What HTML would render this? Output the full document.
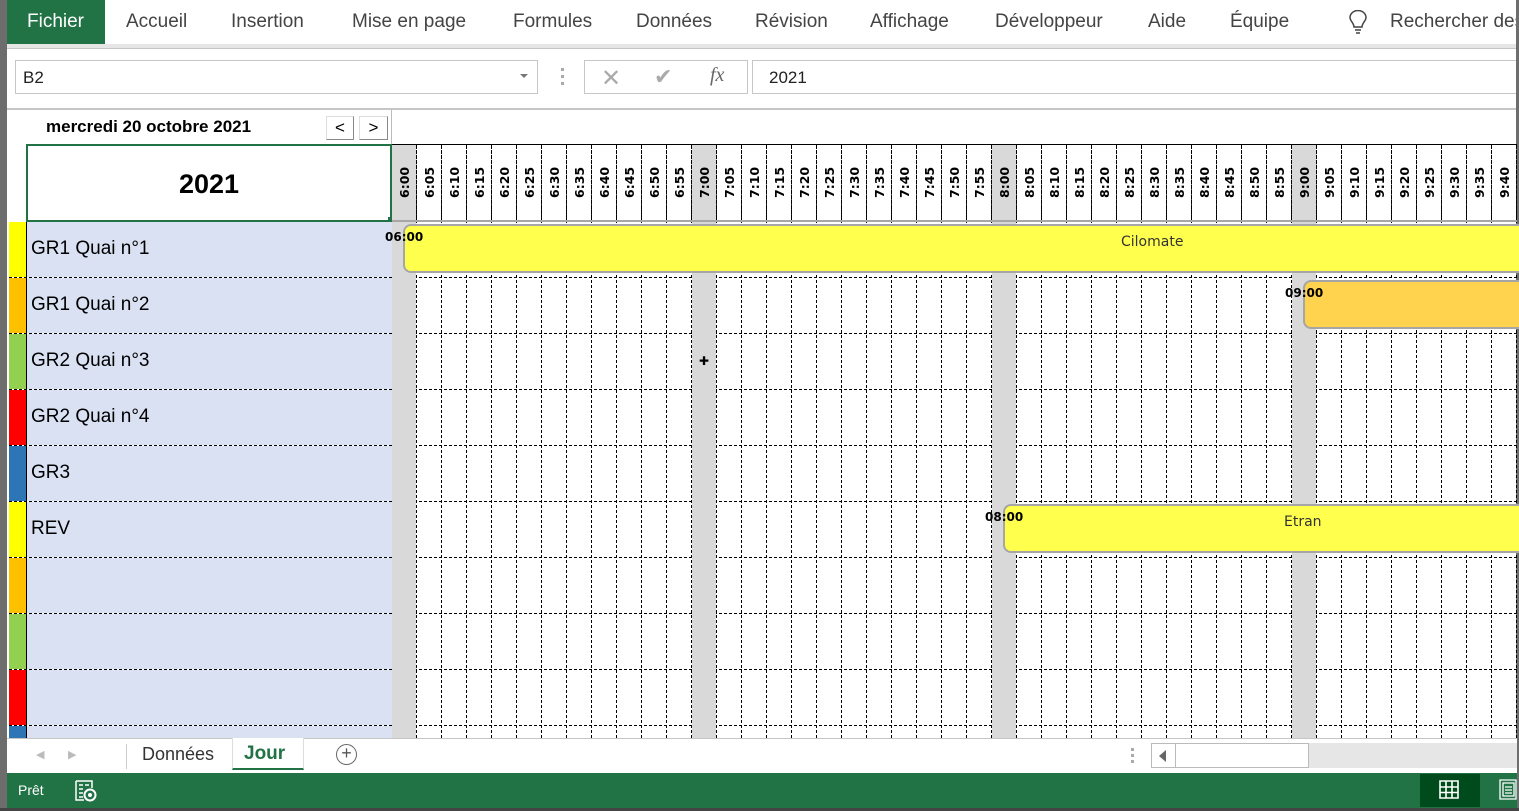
<!DOCTYPE html>
<html><head><meta charset="utf-8">
<style>
*{margin:0;padding:0;box-sizing:border-box}
body{width:1519px;height:811px;overflow:hidden;background:#fff;font-family:"Liberation Sans",sans-serif;position:relative}
.a{position:absolute}
.tab{position:absolute;top:11px;font-size:19px;color:#444;white-space:nowrap}
.hdr{position:absolute;top:146px;width:25px;height:74px;border-right:1px dashed #000;}
.hdr span{position:absolute;left:5px;top:4px;writing-mode:vertical-rl;transform:rotate(180deg);font:bold 12.5px "DejaVu Sans",sans-serif;color:#000;height:48px;text-align:left}
.bar{position:absolute;border:2px solid #a6a6a6;border-radius:8px;font:14px "DejaVu Sans",sans-serif;color:#333}
.lbl{position:absolute;font:bold 12px "DejaVu Sans",sans-serif;color:#000}
</style></head><body>
<div class="a" style="left:0;top:0;width:7px;height:811px;background:#6d6d6d"></div>
<div class="a" style="left:7px;top:0;width:98px;height:44px;background:#217346"></div>
<div class="tab" style="left:27px;color:#fff">Fichier</div>
<div class="tab" style="left:126px">Accueil</div>
<div class="tab" style="left:231px">Insertion</div>
<div class="tab" style="left:352px">Mise en page</div>
<div class="tab" style="left:513px">Formules</div>
<div class="tab" style="left:636px">Données</div>
<div class="tab" style="left:755px">Révision</div>
<div class="tab" style="left:870px">Affichage</div>
<div class="tab" style="left:995px">Développeur</div>
<div class="tab" style="left:1148px">Aide</div>
<div class="tab" style="left:1230px">Équipe</div>
<svg class="a" style="left:1348px;top:10px" width="20" height="26" viewBox="0 0 20 26"><path d="M6 17 C6 13 2 11 2 7.5 A8 7 0 0 1 18 7.5 C18 11 14 13 14 17 Z M7 20 H13 M8 23 H12" fill="none" stroke="#444" stroke-width="1.5"/></svg>
<div class="tab" style="left:1390px">Rechercher des</div>
<div class="a" style="left:7px;top:44px;width:1512px;height:4px;background:#e6e6e6"></div>
<div class="a" style="left:7px;top:48px;width:1512px;height:62px;background:#fff;border-top:1px solid #c6c6c6"></div>
<div class="a" style="left:15px;top:60px;width:523px;height:34px;border:1px solid #c6c6c6;font-size:17px;padding:7px 0 0 7px;color:#222">B2</div>
<div class="a" style="left:520px;top:74px;width:0;height:0;border-left:4px solid transparent;border-right:4px solid transparent;border-top:4px solid #777"></div>
<div class="a" style="left:561px;top:68px;width:3px;height:18px;background:repeating-linear-gradient(#aaa 0 3px,transparent 3px 7px)"></div>
<div class="a" style="left:584px;top:60px;width:164px;height:34px;border:1px solid #c6c6c6"></div>
<div class="a" style="left:601px;top:64px;font-size:24px;color:#aaa">✕</div>
<div class="a" style="left:654px;top:64px;font-size:22px;color:#aaa">✔</div>
<div class="a" style="left:710px;top:64px;font:italic 20px 'Liberation Serif',serif;color:#666">fx</div>
<div class="a" style="left:752px;top:60px;width:770px;height:34px;border:1px solid #c6c6c6;font-size:17px;padding:7px 0 0 16px;color:#222">2021</div>
<div class="a" style="left:7px;top:108px;width:1512px;height:2px;background:#c6c6c6"></div>
<div class="a" style="left:1516px;top:0;width:3px;height:811px;background:#6d6d6d"></div>

<div class="a" style="left:46px;top:117px;font:bold 17px 'Liberation Sans',sans-serif">mercredi 20 octobre 2021</div>
<div class="a" style="left:326px;top:116px;width:28px;height:24px;border-right:1px solid #888;border-bottom:1px solid #888;border-top:1px solid #ddd;border-left:1px solid #ddd;font-size:17px;text-align:center;line-height:22px">&lt;</div>
<div class="a" style="left:359px;top:116px;width:29px;height:24px;border-right:1px solid #888;border-bottom:1px solid #888;border-top:1px solid #ddd;border-left:1px solid #ddd;font-size:17px;text-align:center;line-height:22px">&gt;</div>
<div class="a" style="left:391px;top:110px;width:1px;height:35px;background:#bbb"></div>
<div class="a" style="left:392px;top:144px;width:1125px;height:1px;background:#000"></div>
<div class="a" style="left:26px;top:144px;width:366px;height:78px;border:2px solid #217346;font:bold 27px 'Liberation Sans',sans-serif;text-align:center;line-height:76px">2021</div>
<div class="a" style="left:388px;top:217px;width:6px;height:6px;background:#217346"></div>

<div id="grid"></div>
<div class="a" style="left:392px;top:220px;width:1125px;height:2px;background:#a6a6a6"></div>

<div class="bar" style="left:403px;top:224px;width:1130px;height:49px;background:#ffff4d"><span class="a" style="left:716px;top:8px">Cilomate</span></div>
<div class="lbl" style="left:385px;top:230px">06:00</div>
<div class="bar" style="left:1303px;top:280px;width:230px;height:49px;background:#ffd34d"></div>
<div class="lbl" style="left:1285px;top:286px">09:00</div>
<div class="bar" style="left:1003px;top:504px;width:530px;height:49px;background:#ffff4d"><span class="a" style="left:279px;top:8px">Etran</span></div>
<div class="lbl" style="left:985px;top:510px">08:00</div>
<div class="a" style="left:699px;top:354px;font-size:12px;color:#000">✚</div>

<div class="a" style="left:7px;top:738px;width:1510px;height:35px;background:#fff;border-top:1px solid #c6c6c6"></div>
<div class="a" style="left:36px;top:748px;font-size:11px;color:#bbb">◀</div>
<div class="a" style="left:68px;top:748px;font-size:11px;color:#bbb">▶</div>
<div class="a" style="left:126px;top:744px;width:1px;height:25px;background:#ccc"></div>
<div class="a" style="left:142px;top:744px;font-size:18px;color:#333">Données</div>
<div class="a" style="left:232px;top:738px;width:72px;height:32px;border-bottom:2px solid #217346;background:#fff;border-left:1px solid #ddd;border-right:1px solid #ddd"></div>
<div class="a" style="left:244px;top:743px;font:bold 19px 'Liberation Sans',sans-serif;color:#217346">Jour</div>
<div class="a" style="left:336px;top:744px;width:21px;height:21px;border:1.5px solid #666;border-radius:50%;text-align:center;line-height:17px;font-size:18px;color:#555">+</div>
<div class="a" style="left:1131px;top:748px;width:3px;height:16px;background:repeating-linear-gradient(#aaa 0 3px,transparent 3px 6px)"></div>
<div class="a" style="left:1151px;top:743px;width:158px;height:25px;border:1px solid #bbb;background:#fff"></div>
<div class="a" style="left:1175px;top:743px;width:1px;height:25px;background:#bbb"></div>
<div class="a" style="left:1159px;top:750px;width:0;height:0;border-top:6px solid transparent;border-bottom:6px solid transparent;border-right:7px solid #666"></div>
<div class="a" style="left:1309px;top:743px;width:208px;height:25px;background:#e6e6e6"></div>

<div class="a" style="left:7px;top:773px;width:1510px;height:35px;background:#217346"></div>
<div class="a" style="left:18px;top:782px;font-size:14px;color:#fff">Prêt</div>
<svg class="a" style="left:75px;top:780px" width="22" height="22" viewBox="0 0 22 22"><path d="M1 1H17V8 M1 1V20H9 M4 5H8 M4 9H8 M4 13H8 M4 17H8 M10 5H14" stroke="#fff" stroke-width="1.5" fill="none"/><circle cx="15" cy="15" r="5.5" stroke="#fff" stroke-width="2" fill="none"/><circle cx="15" cy="15" r="2" fill="#fff"/></svg>
<div class="a" style="left:1420px;top:774px;width:60px;height:33px;background:#004b1c"></div>
<svg class="a" style="left:1439px;top:780px" width="20" height="19"><path d="M1 1H19V18H1Z M7 1V18 M13 1V18 M1 7H19 M1 12.5H19" stroke="#fff" stroke-width="1.6" fill="none"/></svg>
<svg class="a" style="left:1499px;top:779px" width="18" height="21"><path d="M1 1H17V20H1Z M4 4H15V17H4Z M6 8H13 M6 11H13 M6 14H13" stroke="#fff" stroke-width="1.3" fill="none"/></svg>
<div class="a" style="left:0;top:808px;width:1519px;height:3px;background:#444"></div>

<script>
var g=document.getElementById('grid'),h='';
var strips=['#ffff00','#ffc000','#92d050','#ff0000','#2e75b6','#ffff00','#ffc000','#92d050','#ff0000','#2e75b6'];
var names=['GR1 Quai n°1','GR1 Quai n°2','GR2 Quai n°3','GR2 Quai n°4','GR3','REV','','','',''];
for(var r=0;r<10;r++){var y=222+r*56;var ht=Math.min(55,738-y);if(ht<=0)break;
h+='<div class="a" style="left:9px;top:'+y+'px;width:17px;height:'+ht+'px;background:'+strips[r]+'"></div>';
h+='<div class="a" style="left:26px;top:'+y+'px;width:366px;height:'+ht+'px;background:#d9e1f2;border-left:1px solid #000"></div>';
h+='<div class="a" style="left:31px;top:'+(y+16)+'px;font-size:19px;color:#000">'+names[r]+'</div>';
h+='<div class="a" style="left:9px;top:'+(y+55)+'px;width:1508px;height:0;border-top:1px dashed #000"></div>';}
for(var c=0;c<45;c++){var x=392+c*25;var hr=Math.floor(c/12)+6,m=(c%12)*5;var t=hr+':'+(m<10?'0':'')+m;
if(c%12==0)h+='<div class="a" style="left:'+x+'px;top:145px;width:24px;height:593px;background:#d9d9d9"></div>';
h+='<div class="a" style="left:'+x+'px;top:145px;width:25px;height:593px;border-right:1px dashed #000"></div>';
h+='<div class="hdr" style="left:'+x+'px"><span>'+t+'</span></div>';}
g.innerHTML=h;
</script>
</body></html>
